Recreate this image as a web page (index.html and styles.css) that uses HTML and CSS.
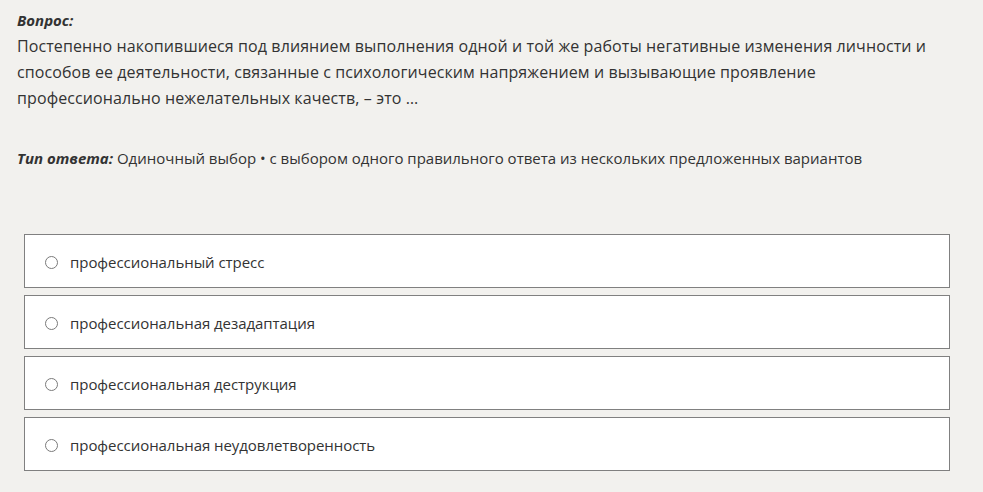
FILE: index.html
```html
<!DOCTYPE html>
<html lang="ru">
<head>
<meta charset="utf-8">
<link rel="stylesheet" href="styles.css">
</head>
<body>
<div class="page">
  <div class="question">
    <div class="label">Вопрос:</div>
    <div class="text">Постепенно накопившиеся под влиянием выполнения одной и той же работы негативные изменения личности и способов ее деятельности, связанные с психологическим напряжением и вызывающие проявление профессионально нежелательных качеств, – это …</div>
  </div>
  <div class="type"><span class="label">Тип ответа:</span> Одиночный выбор • с выбором одного правильного ответа из нескольких предложенных вариантов</div>
  <div class="options">
    <label class="option"><span class="radio"></span><span>профессиональный стресс</span></label>
    <label class="option"><span class="radio"></span><span>профессиональная дезадаптация</span></label>
    <label class="option"><span class="radio"></span><span>профессиональная деструкция</span></label>
    <label class="option"><span class="radio"></span><span>профессиональная неудовлетворенность</span></label>
  </div>
</div>
</body>
</html>
```
FILE: styles.css
```css
html, body {
  margin: 0;
  padding: 0;
  background: #f2f1ee;
}
.page {
  padding: 7px 33px 0 17px;
  font-family: "Open Sans", "Noto Sans", sans-serif;
  color: #333333;
  font-size: 16px;
  line-height: 26px;
}
.label {
  font-weight: 700;
  font-style: italic;
  font-size: 15px;
}
.text {
  font-size: 16px;
  letter-spacing: 0.1px;
}
.type {
  margin-top: 34px;
  font-size: 15px;
}
.options {
  margin: 63px 0 0 7px;
  display: flex;
  flex-direction: column;
  gap: 7px;
}
.option {
  box-sizing: border-box;
  display: flex;
  align-items: center;
  height: 54px;
  background: #ffffff;
  border: 1px solid #808080;
  padding: 2px 0 0 20px;
  font-size: 15px;
  letter-spacing: -0.05px;
}
.radio {
  width: 11px;
  height: 11px;
  border: 1px solid #7a7a7a;
  border-radius: 50%;
  margin: 1px 12px 0 0;
  background: #fff;
}
```
